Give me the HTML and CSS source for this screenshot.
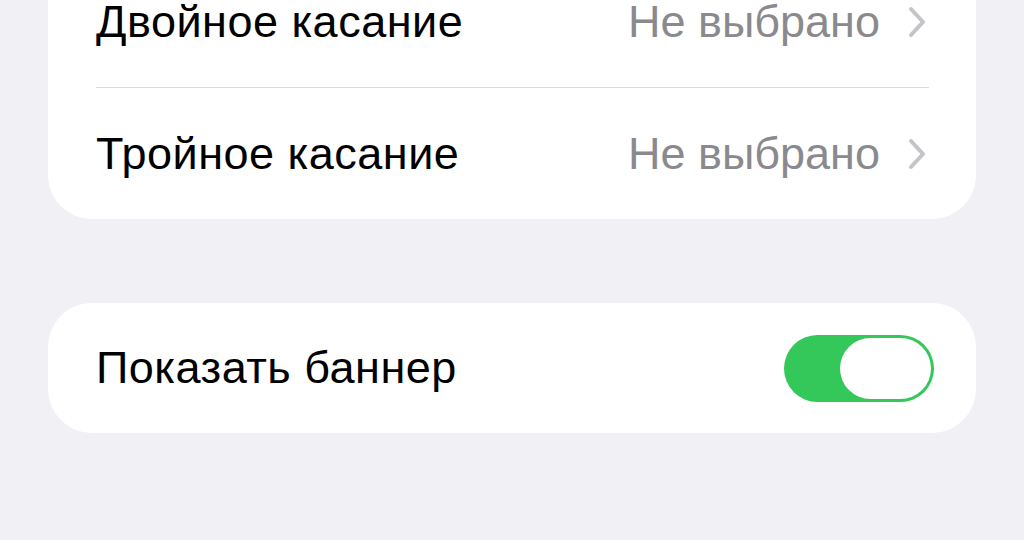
FILE: index.html
```html
<!DOCTYPE html>
<html lang="ru">
<head>
	<meta charset="UTF-8">
	<title>Касание задней панели</title>
<link rel="stylesheet" href="styles.css">
</head>
<body>
<div class="page">
	<div class="group group-top">
		<div class="row">
			<span class="label">Двойное касание</span>
			<span class="value">Не выбрано</span>
			<svg class="chevron" viewBox="0 0 18 32" width="18" height="32"><path d="M3 3 L15 16 L3 29"/></svg>
		</div>
		<div class="row">
			<span class="label">Тройное касание</span>
			<span class="value">Не выбрано</span>
			<svg class="chevron" viewBox="0 0 18 32" width="18" height="32"><path d="M3 3 L15 16 L3 29"/></svg>
		</div>
	</div>
	<div class="group">
		<div class="row row-switch">
			<span class="label">Показать баннер</span>
			<div class="switch on"><div class="knob"></div></div>
		</div>
	</div>
</div>
</body>
</html>
```

FILE: styles.css
```css
body{margin:0;background:#f0f0f5;font-family:"Liberation Sans",Arial,sans-serif;}
.page{padding:0 48px;}
.group{background:#fff;border-radius:44px;padding-left:48px;margin-top:84px;}
.group-top{margin-top:-44px;}
.row{display:flex;align-items:center;height:131px;margin-right:47px;border-bottom:1px solid #dcdce0;}
.row:last-child{border-bottom:none;}
.label{flex:1;font-size:45px;letter-spacing:0.5px;color:#000;}
.value{font-size:45px;color:#8a8a8e;margin-right:28px;}
.chevron{fill:none;stroke:#c4c4c8;stroke-width:4;stroke-linecap:round;stroke-linejoin:round;margin-right:3px;}
.row-switch{height:130px;margin-right:42px;}
.switch{width:150px;height:67px;border-radius:34px;background:#34c759;box-sizing:border-box;padding:3px;display:flex;justify-content:flex-end;}
.knob{width:91px;height:61px;border-radius:31px;background:#fff;}
```
